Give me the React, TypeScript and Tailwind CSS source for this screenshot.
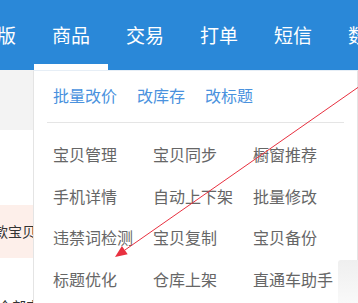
import React from "react";

const navItems = ["旗舰版", "商品", "交易", "打单", "短信", "数据"];

const quickLinks = ["批量改价", "改库存", "改标题"];

const menuItems = [
  "宝贝管理", "宝贝同步", "橱窗推荐",
  "手机详情", "自动上下架", "批量修改",
  "违禁词检测", "宝贝复制", "宝贝备份",
  "标题优化", "仓库上架", "直通车助手",
];

export default function App() {
  return (
    <div className="relative w-[358px] h-[303px] overflow-hidden bg-white font-['Microsoft_YaHei','Noto_Sans_CJK_SC',sans-serif]">
      {/* top nav */}
      <nav className="h-[70px] bg-[#2a88d8] flex -ml-[59px] whitespace-nowrap">
        {navItems.map((item) => (
          <div
            key={item}
            className="relative h-[70px] px-[18px] flex items-center text-[19px] text-white"
          >
            {item}
            {item === "商品" && (
              <div className="absolute left-0 right-0 bottom-0 h-[6px] bg-white" />
            )}
          </div>
        ))}
      </nav>

      {/* page content behind the menu */}
      <div className="flex flex-col">
        <div className="h-[60px] bg-[#f3f3f3]" />
        <div className="h-[75px]" />
        <div className="h-[53px] bg-[#fdefea] flex items-center -ml-[20px] text-[14px] text-[#333] whitespace-nowrap">
          同款宝贝
        </div>
        <div className="h-[38px]" />
        <div className="-ml-[2px] text-[14px] leading-[20px] text-[#333]">全部宝贝</div>
      </div>

      {/* dropdown panel */}
      <div className="absolute left-[33px] top-[70px] w-[325px] h-[250px] bg-white border border-[#e4e4e4] border-t-[#e6eef6]">
        <div className="mx-[13px]">
          <div className="flex gap-[20px] pl-[6px] pt-[12px] h-[51px] text-[16px] leading-[24px] text-[#4a92de]">
            {quickLinks.map((l) => (
              <span key={l}>{l}</span>
            ))}
          </div>
          <div className="h-px bg-[#e5e5e5]" />
          <div className="grid grid-cols-[100px_100px_100px] pl-[6px] pt-[10px] text-[16px] text-[#666]">
            {menuItems.map((m) => (
              <div key={m} className="h-[41.7px] flex items-center whitespace-nowrap">
                {m}
              </div>
            ))}
          </div>
        </div>
      </div>

      {/* floating box bottom right */}
      <div className="absolute left-[338px] top-[260px] w-[20px] h-[43px] rounded-tl-[3px] bg-gradient-to-b from-[#efefef] to-[#f9f9f9]" />

      {/* annotation arrow */}
      <svg className="absolute inset-0 pointer-events-none" width="358" height="303">
        <line x1="360" y1="86" x2="124.8" y2="250.1" stroke="#e8303f" strokeWidth="1" />
        <polygon points="115,257 127.7,254.2 121.9,246" fill="#e8303f" />
      </svg>
    </div>
  );
}
